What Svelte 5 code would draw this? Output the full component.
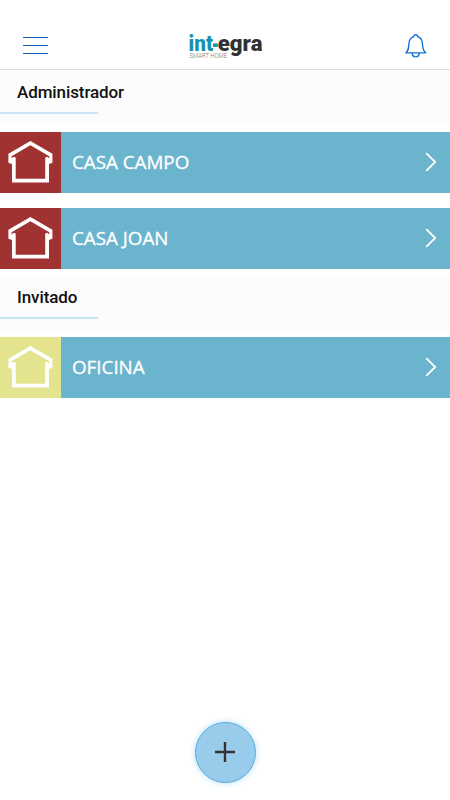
<script lang="ts">
	type Home = { name: string; color: string };
	type Group = { title: string; homes: Home[] };

	const groups: Group[] = [
		{
			title: 'Administrador',
			homes: [
				{ name: 'CASA CAMPO', color: '#a03232' },
				{ name: 'CASA JOAN', color: '#a03232' }
			]
		},
		{
			title: 'Invitado',
			homes: [{ name: 'OFICINA', color: '#e4e48e' }]
		}
	];
</script>

<div class="screen">
	<header>
		<button class="icon-button" aria-label="Menu">
			<svg width="26" height="20" viewBox="0 0 26 20">
				<g fill="#1262bd">
					<rect y="1" width="25" height="1" />
					<rect y="9" width="25" height="1" />
					<rect y="17" width="25" height="1" />
				</g>
			</svg>
		</button>

		<svg class="logo" width="80" height="44" viewBox="-2 0 80 44">
			<text class="brand blue" x="0.5" y="27" textLength="24.5" lengthAdjust="spacingAndGlyphs">int</text>
			<rect x="25" y="19.4" width="4.8" height="3.6" fill="#1793b0" />
			<text class="brand dark" x="29.8" y="27" textLength="44.6" lengthAdjust="spacingAndGlyphs">egra</text>
			<text class="tagline" x="1.5" y="34" textLength="37.5" lengthAdjust="spacingAndGlyphs">SMART HOME</text>
		</svg>

		<button class="icon-button" aria-label="Notificaciones">
			<svg width="24" height="26" viewBox="0 0 24 26" fill="none" stroke="#1473cf" stroke-width="1.4" stroke-linejoin="round">
				<path d="M1.8 19.9C4.5 17.5 4.6 15.5 4.8 11.5C5 7.3 6.4 4.7 9.6 3.7C9.6 1 13.8 1 13.8 3.7C17 4.7 18.3 7.3 18.5 11.5C18.7 15.5 19 17.5 21.7 19.9Z" />
				<path d="M8.2 20C8.2 25.1 15.2 25.1 15.2 20" />
			</svg>
		</button>
	</header>

	<main>
		{#each groups as group}
			<section>
				<h2>{group.title}</h2>
				<ul>
					{#each group.homes as home}
						<li>
							<div class="thumb" style="background: {home.color}">
								<svg width="61" height="60" viewBox="0 0 61 60">
									<path
										fill="#fff"
										fill-rule="evenodd"
										d="M30.4 9L52.4 21.8V30.8L49 32V50.4H12V32L8.4 30.8V21.8ZM30.4 13.3L11.6 24.3V26.4L13.6 24.8L15.7 25.6V46.8H45.2V25.6L47.3 24.8L49.3 26.4V24.3Z"
									/>
								</svg>
							</div>
							<span class="name">{home.name}</span>
							<svg class="chevron" width="12" height="20" viewBox="0 0 12 20">
								<path d="M1.2 1.2L10.2 10L1.2 18.8" fill="none" stroke="#fff" stroke-width="1.8" />
							</svg>
						</li>
					{/each}
				</ul>
			</section>
		{/each}
	</main>

	<footer>
		<button class="add" aria-label="Añadir">
			<svg width="20" height="20" viewBox="0 0 20 20">
				<path d="M10 0v20M0 10h20" stroke="#333" stroke-width="2.4" />
			</svg>
		</button>
	</footer>
</div>

<style>
	:global(body) {
		margin: 0;
		background: #fff;
	}

	.screen {
		display: flex;
		flex-direction: column;
		box-sizing: border-box;
		height: 800px;
		font-family: 'Open Sans', sans-serif;
	}

	header {
		display: flex;
		align-items: center;
		justify-content: space-between;
		box-sizing: border-box;
		height: 70px;
		padding: 23px 22px 0 23px;
		border-bottom: 1px solid #dcdcdc;
	}

	button {
		padding: 0;
		border: 0;
		background: none;
		cursor: pointer;
	}

	svg {
		display: block;
	}

	.logo {
		margin-right: 1px;
	}

	.brand {
		font-family: Roboto, sans-serif;
		font-size: 22.5px;
		font-weight: 900;
	}

	.blue {
		fill: #1793b0;
	}

	.dark {
		fill: #303133;
	}

	.tagline {
		font-family: Roboto, sans-serif;
		font-size: 6.5px;
		font-weight: 300;
		fill: #777;
	}

	main {
		flex: 1;
	}

	h2 {
		box-sizing: border-box;
		height: 54px;
		margin: 0;
		padding: 10px 0 0 17px;
		/* short accent line under the title */
		background: linear-gradient(#c8e4f5, #c8e4f5) 0 42px / 98px 2px no-repeat #fcfcfc;
		color: #111;
		font-family: Roboto, sans-serif;
		font-size: 17px;
		font-weight: 500;
		letter-spacing: -0.1px;
		line-height: 24px;
	}

	section + section h2 {
		padding-top: 9px;
		background-position: 0 41px;
	}

	ul {
		display: flex;
		flex-direction: column;
		gap: 15px;
		margin: 0;
		padding: 7.5px 0 7px;
		list-style: none;
	}

	li {
		display: flex;
		align-items: center;
		height: 61px;
		background: #6bb4cd;
	}

	.thumb {
		width: 61px;
		height: 61px;
	}

	.name {
		flex: 1;
		padding: 0 0 1px 11px;
		color: #fff;
		font-size: 18.8px;
		font-weight: 500;
		-webkit-text-stroke: 0.3px #fff;
	}

	.chevron {
		margin: 0 13px 1px 0;
	}

	footer {
		display: flex;
		justify-content: center;
		padding-bottom: 17.5px;
	}

	.add {
		display: flex;
		align-items: center;
		justify-content: center;
		box-sizing: border-box;
		width: 61px;
		height: 61px;
		border: 1px solid #58aee0;
		border-radius: 50%;
		background: #99cbeb;
		box-shadow: 0 0 6px #b5dcf6;
	}
</style>
